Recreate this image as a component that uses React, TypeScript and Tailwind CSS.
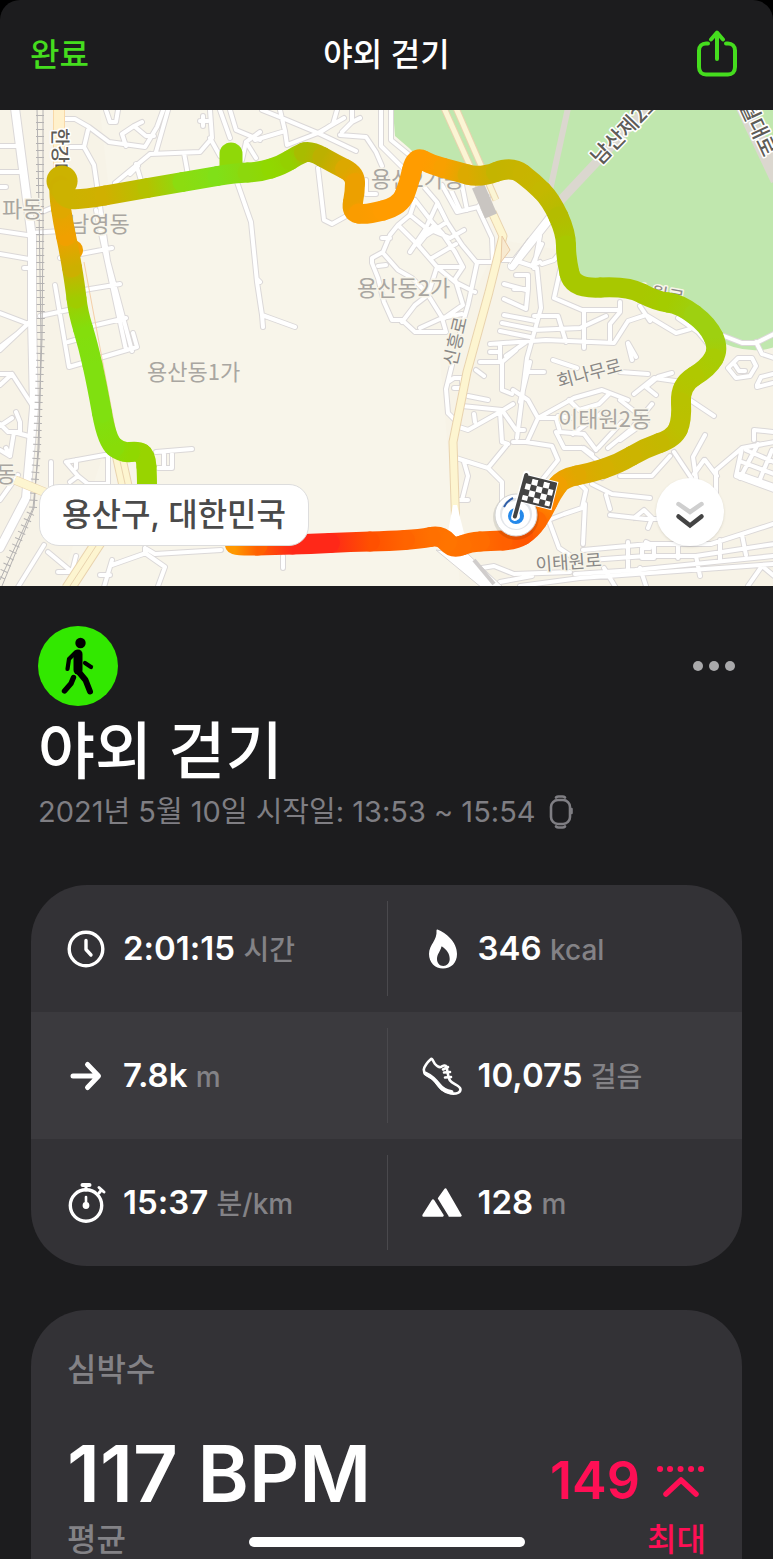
import type { ReactNode } from "react";

type RoutePoint = [number, number, string];

const ROUTE: RoutePoint[] = [
  [147, 492, "#98d400"],
  [147, 478, "#98d400"],
  [146, 456, "#98d400"],
  [138, 451, "#90d800"],
  [122, 453, "#88dc08"],
  [107, 441, "#80e010"],
  [97, 385, "#80e010"],
  [88, 345, "#84de0c"],
  [78, 312, "#a0cc00"],
  [75, 285, "#ccb000"],
  [69, 250, "#f0a000"],
  [63, 222, "#e0a800"],
  [59, 195, "#ccb000"],
  [60, 182, "#ccb200"],
  [64, 198, "#ccb200"],
  [80, 200, "#d0b000"],
  [130, 191, "#b4c200"],
  [165, 185, "#8cdc10"],
  [200, 179, "#80e018"],
  [235, 173, "#8cd80c"],
  [260, 172, "#90d800"],
  [282, 165, "#94d000"],
  [298, 155, "#a8bc00"],
  [310, 150, "#bcb000"],
  [335, 164, "#dca800"],
  [355, 174, "#eca000"],
  [355, 192, "#eca000"],
  [351, 212, "#fa9c00"],
  [366, 215, "#ff9c00"],
  [400, 206, "#ff9c00"],
  [409, 184, "#ff9c00"],
  [415, 156, "#ff9c00"],
  [432, 165, "#f8a000"],
  [455, 171, "#dcaa00"],
  [480, 178, "#c4b400"],
  [512, 166, "#c8b400"],
  [533, 182, "#c4b800"],
  [551, 200, "#b4bc00"],
  [566, 233, "#a8c800"],
  [566, 258, "#a8c800"],
  [573, 289, "#a8c800"],
  [628, 286, "#a8c800"],
  [656, 301, "#a4cc00"],
  [680, 304, "#9ed010"],
  [708, 325, "#9ed010"],
  [719, 349, "#a8cc04"],
  [708, 368, "#b0c800"],
  [680, 385, "#b8c200"],
  [682, 420, "#bcc000"],
  [674, 438, "#c4b800"],
  [645, 448, "#ccb400"],
  [618, 464, "#d4b000"],
  [590, 473, "#e0a800"],
  [563, 478, "#f0a000"],
  [552, 493, "#ff8800"],
  [543, 512, "#ff6a00"],
  [531, 530, "#ff5500"],
  [515, 540, "#ff6000"],
  [490, 541, "#ff6c00"],
  [470, 542, "#ff7000"],
  [453, 549, "#ff7400"],
  [441, 535, "#ff7000"],
  [420, 539, "#ff6400"],
  [390, 541, "#ff5000"],
  [350, 542, "#ff2818"],
  [310, 544, "#ff2818"],
  [275, 545, "#ff6000"],
  [240, 546, "#ff9800"],
  [230, 543, "#ff9c00"],
];

const STREETS = [
  // west of the railway
  "M0 146H18 M0 172H22 M0 187h6 M0 231 34 236 M0 254 29 259 M0 313 34 326 M0 350 34 318 M24 268h8",
  "M0 347l18-14 M0 374l12 0 M12 374 34 408 M0 385 12 374 M12 418l-12 8 M16 412l4 10v10h-12l-8-8 M14 432l18 5 M14 432l-4 24-10-6 M10 456l-4-8 M0 500 18 475",
  "M42 212 56 206 M30 233 62 231 M40 316 68 310 M51 462v24",
  // Namyeong-dong grid
  "M63 119h12l14 8 20 15 36 5 12-20 8-22 M88 130l-4 17H70 M84 147l10 18 14 96 24 90 M106 110l4 12h6l2-12",
  "M122 134l12-8 8-4 M122 134l4 12 M134 126l12 10h8 M150 154l-35 29 M136 164l6 20 M130 174l8-8 M150 154l50-2 12-14-2-28 M184 153l4 22 M168 110l-12 42",
  "M200 121h8 M203 116v10 M220 110l10 28 M210 138l10 18 M230 110l6 20 24 10 M260 132l-14 10-4 18 M246 142l10 16",
  "M60 258l52-10 M84 290l36-6 M92 326l34-8 M55 285l14 82 68-20-4-14 M96 210l30 140 M68 342l14-4",
  "M237 182l14 40 6 60 5 33 33 12 M257 279l3 3 M262 315l1 12",
  "M66 462l44-8 M66 462l12 14-8 6 M78 476l10 8h20v-30 M76 460v8 M156 452l36-3 M158 468h14v-14 M164 454v14",
  // south west
  "M48 552l24 20h-14 M72 572l4-16 M44 545l-26 42 M145 548l10 6 66-4 M112 565l34-12 M112 560l-8 27 M145 553l20 14-8 22 M283 556v12 M100 575l10 0 M145 548v6",
  // top centre
  "M255 140l30-9-5-21 M262 110l20 8 36 15 26-15 M318 133l38 18 M337 110l-4 14-14 9 M285 131l2 14 M287 145l31-12",
  "M340 135l26 2 10 15 6 14 M352 110v12l8-4 M352 122l-10 10 M381 110v36l34 34 M391 110v30l22 18 M318 168l6 52 8 4 18-10 M366 180v14h10 M386 176l-8 8",
  // Yongsan 2-ga
  "M415 200l-5 15-12 10-8 10-7 17-11 6v5l6 15 6 24 8 18h10l13 12h30 M390 238l-8 0 M378 266l8-1",
  "M415 200l17 22 10 11 13 19 8 15 M425 188l12 14 10 20 15 23 15 18 M442 185l15 27 21-5 10-10 M462 185l5 25",
  "M478 208l14 30 1 24h-16 M398 225l20 20 19 22 18 15 20 10 M383 253l15 17 14 8 16 16 M410 252l15-22 12-26",
  "M437 267h26l-8 12 8 26-20 14-15-24-13 10-13 17 M437 267l-9 28 M477 263l-9 42-8 28 M442 318l20-4 M442 318l-22 10 M418 245l16-20 M432 258l24-14",
  "M410 215l16 13 24 10 14-8 M447 222l-22 14 M442 318l4 14 M450 188l10 22",
  // Huam side
  "M498 260l16 0 18 6 10-22 M540 236l-6 32 M532 266l8-4 M562 250l-8 10-12 4 M516 275h12v14h-14 M528 289l-2 20-22-10 M504 284l22 6",
  "M537 268l4 40-14 50-10 80 M562 262l-8 36 28 12h36 M584 310v38 M620 302v10l-10 12v18 M534 316h24l8 26 M534 330l46-2 26-12 M490 344l56-4 68 3 14-22 18-6 30 18 14-4",
  "M504 315l32 6 M502 323l30 6 M500 331l30 6 M506 356l20-14 M640 306l10 15 M628 343l8 14 M678 318l20 14 10 12",
  "M724 336l18 7h14l18-9 M756 342l6 12 12 4 M728 368l10-10h14l4 8-6 10-14 2z M735 365l4 6h6 M757 387l16-4 M757 385l4-8 12-3",
  // east of Sinheung-ro
  "M480 362h22l14-12 M502 362v28l10 4 M476 370l8 6 M468 396l20 4 M462 406l40 4 14 20 8 0 M456 426l12 4 32-18 13-8 M474 414l1 8 M500 412l2 30 6 2 M456 458l32 10 18-22 M488 468l14 14v20 M464 462l4 14-6 24 M458 500h10",
  "M452 365l-6 24 2 24 10 10 M448 382l6-4h8v10h-8 M490 352h10 M500 345v14",
  "M513 442l14 0 11-24-10-18-15-10 M526 442l26 4 6 14-24 30 M538 418l36-20 M540 418h16l4 14 24 2 12 16 M530 362l-10 40 M528 372h16 M574 398l28-8 26 10 M553 360l24 8 M569 400l10 10 20-6 10-10",
  "M573 434l30-22 M582 448l20 16-8 14 M598 448l24-26 M608 448l32-26 M620 440l28-20 M652 404l-20 24 M574 418l-16-2 M556 432l8 16 18 0 M620 400l18 14 M634 394l20-16 28 4",
  "M690 400l24 16 M674 452l20 30 M694 474l10-14 M705 435l-12 22 4 28 M705 460l12 16 M620 476h32l18-20 M592 484l20 10 38 4 M606 495l4 14 M602 478l-6-8",
  "M610 515l36 4h12 M634 518l10-8 8 8-4 10 M716 510v-40l26-22 32-6 M754 430v10 M754 430l20 2 M742 448l-6 28 38 14 M746 450l28 12 M742 462l32 12 M740 474l34 12 M758 444l-18 34 M772 450l-14 34",
  "M656 395l-10-8 12-10 14-4 M620 372l28 2 M628 344l4 16 M584 448l8 6",
  // Itaewon-ro
  "M545 510l14 38 12 8 M585 504l-2 40 M583 550l66-6h62l62-20 M590 560l56-4h50l78-12 M646 542l8 4v12h-12v-10h8 M628 542v28 M678 540v18 M696 556l4 20 M575 574l60-4 138-14",
  "M520 586l60-8 194-14 M470 570l24-4 20 8 56-2 M500 582l32-6 M604 568l12 20 M640 568l6 18 M720 540v20 M742 535l4 20 M748 586l14-20 12 10",
  "M538 524l26-10 18-6 4-18-12-12 M562 478l-10 14",
];

const NARROW_ROADS = STREETS.join(" ");
const WIDE_ROADS = "M15 108l17 130v80l2 90-8 90-26 50 M558 208l-46 58";

const FINISH_CELLS = [
  [0, 1],
  [0, 3],
  [1, 0],
  [1, 2],
  [1, 4],
  [2, 1],
  [2, 3],
  [3, 0],
  [3, 2],
  [3, 4],
];

const middle = (a: RoutePoint, b: RoutePoint) => [
  (a[0] + b[0]) / 2,
  (a[1] + b[1]) / 2,
];

// Each leg bends round one point, from the middle of the leg before it
// to the middle of the leg after it.
function RouteLine() {
  return (
    <g strokeWidth="20" strokeLinecap="round">
      {ROUTE.slice(1, -1).map((point, i) => {
        const [x1, y1] = middle(ROUTE[i], point);
        const [x2, y2] = middle(point, ROUTE[i + 2]);
        return (
          <g key={i}>
            <linearGradient
              id={`leg-${i}`}
              gradientUnits="userSpaceOnUse"
              x1={x1}
              y1={y1}
              x2={x2}
              y2={y2}
            >
              <stop offset="0" stopColor={ROUTE[i][2]} />
              <stop offset="1" stopColor={point[2]} />
            </linearGradient>
            <path
              d={`M${x1} ${y1}Q${point[0]} ${point[1]} ${x2} ${y2}`}
              stroke={`url(#leg-${i})`}
            />
          </g>
        );
      })}
    </g>
  );
}

function RouteMap() {
  return (
    <svg
      viewBox="0 110 773 476"
      preserveAspectRatio="xMidYMid slice"
      className="block h-[476px] w-full bg-[#f8f5ea]"
      fill="none"
      strokeLinejoin="round"
      aria-label="경로 지도"
    >
      <path
        d="M0 110H100L110 200 70 240 108 440 60 586H0z M440 360l60-120 60 10 80 60 133 25v251H460z"
        fill="#f7f3e7"
      />
      <path
        d="M393 110l2 26 14 12 14 14 62 14 40-4 26 34 14 32 6 40 16 10 70 6 40 22 16 22q24 14 48 12 12-1 24-8V110z"
        fill="#c0e7ae"
      />
      <g stroke="#dbd7cf">
        <path d="M568 108l-18 82" strokeWidth="6" />
        <path d="M650 105l-90 96" strokeWidth="9" />
        <path d="M742 104l36 76" strokeWidth="15" />
      </g>

      <g strokeLinecap="round">
        <path d={NARROW_ROADS} stroke="#dbd8d8" strokeWidth="6" />
        <path d={WIDE_ROADS} stroke="#dbd8d8" strokeWidth="10" />
        <path d={NARROW_ROADS} stroke="#fff" strokeWidth="4" />
        <path d={WIDE_ROADS} stroke="#fff" strokeWidth="8" />
        <path d="M528 238l-18 26" stroke="#d8d5d4" />
      </g>

      {/* railway */}
      <g stroke="#b4b2b2">
        <path d="M37 108l2 100 2 130-2 110-6 60-33 72" />
        <path d="M43 108v120l-1 110-4 110-4 60-32 78" />
        <path
          d="M40 108v120l1 110-4 110-4 60-32 70"
          strokeWidth="8"
          strokeDasharray="1 6"
        />
      </g>

      {/* main roads */}
      <path d="M59 108v60" stroke="#f9d9a8" strokeWidth="12" />
      <path d="M59 108v60" stroke="#fff1cc" strokeWidth="10" />
      <path d="M84 262l34 182 M103 400l12 50" stroke="#f5cfa8" />
      <g stroke="#e9d3ae">
        <path d="M118 452l10 45-60 92" strokeWidth="14" />
        <path d="M492 212l11 24-14 56-22 80-14 70 3 90" strokeWidth="9" />
        <path d="M15 480l34 14" strokeWidth="9" />
      </g>
      <g stroke="#fdf5d0">
        <path d="M118 452l10 45-60 92" strokeWidth="12" />
        <path d="M492 212l11 24-14 56-22 80-14 70 3 90" strokeWidth="7" />
        <path d="M15 480l34 14" strokeWidth="8" />
      </g>
      <path d="M118 452l10 45-60 92" stroke="#e9d3ae" />
      <path d="M444 108l44 98 M456 108l40 92" stroke="#e9d3ae" strokeWidth="7" />
      <path d="M444 108l44 98 M456 108l40 92" stroke="#fbf5d4" strokeWidth="5" />
      <path d="M478 186l13 30" stroke="#c9c5c1" strokeWidth="13" />
      <path d="M502 236l8 14-9 12z" fill="#f8ead0" stroke="#e9c9a4" />
      <path d="M453 505l-6 32h18l-8-32z" fill="#fff" />
      <path d="M436 550l32 4 36 34h-22z" fill="#fff" stroke="#d8d5d4" />
      <path d="M474 560l20 24" stroke="#d0cdcc" strokeWidth="4" />

      <g
        fontFamily='"Noto Sans CJK KR", sans-serif'
        fill="#a9a6a1"
        stroke="#f8f5ea"
        strokeWidth="3"
        paintOrder="stroke"
      >
        <g fontSize="22">
          <text x="2" y="217">파동</text>
          <text x="69" y="232">남영동</text>
          <text x="147" y="380">용산동1가</text>
          <text x="357" y="296">용산동2가</text>
          <text x="371" y="187">용산2가동</text>
          <text x="558" y="427">이태원2동</text>
          <text x="-4" y="482">동</text>
        </g>
        <g fontSize="18" fill="#8a8886">
          <text transform="translate(559 388) rotate(-15)">회나무로</text>
          <text transform="translate(536 571) rotate(-4)">이태원로</text>
          <text transform="translate(456 367) rotate(-77)">신흥로</text>
          <text transform="translate(634 296) rotate(10)">소월로</text>
        </g>
        <g fontSize="21" fill="#5e5c58" fontWeight="500" stroke="#fff">
          <text transform="translate(53 128) rotate(90)" fontSize="19">
            한강대로
          </text>
          <text transform="translate(600 166) rotate(-46)">남산제2호터널</text>
          <text transform="translate(731 88) rotate(65)">소월대로</text>
        </g>
      </g>

      <path d="M62 181h.1" stroke="#ccb200" strokeWidth="31" strokeLinecap="round" />
      <path d="M231 154v14" stroke="#90d808" strokeWidth="23" strokeLinecap="round" />
      <path d="M73 250h.1" stroke="#f0a000" strokeWidth="20" strokeLinecap="round" />
      <RouteLine />

      {/* finish marker */}
      <circle cx="516" cy="517" r="23" fill="#000" opacity=".1" />
      <circle cx="516" cy="515" r="21" fill="#fff" stroke="#d4d4d4" />
      <circle cx="516" cy="514" r="16" fill="#e3e6ea" />
      <circle cx="516" cy="515" r="14" fill="#fff" />
      <path d="M504 507q3-6 9-9" stroke="#2f5ea8" strokeWidth="2" />
      <circle cx="516" cy="516" r="6" fill="#fff" stroke="#2589ea" strokeWidth="4" />
      <g transform="translate(526 476) rotate(14)">
        <path
          d="M0-2L-1 43"
          stroke="#fff"
          strokeWidth="7"
          strokeLinecap="round"
        />
        <path d="M-2-2h35v29H-2z" fill="#fff" />
        <path d="M0 0h31v25H0z" fill="#434343" />
        {FINISH_CELLS.map(([row, col]) => (
          <rect
            key={`${row}-${col}`}
            x={1 + col * 6}
            y={1 + row * 6}
            width="6"
            height="6"
            fill="#fff"
          />
        ))}
        <path
          d="M0 0h31v25H0"
          stroke="#434343"
          strokeWidth="2"
        />
        <path d="M0-1L-1 42" stroke="#434343" strokeWidth="4" strokeLinecap="round" />
      </g>
    </svg>
  );
}

function Icon({ children }: { children: ReactNode }) {
  return (
    <svg
      viewBox="0 0 40 40"
      className="size-10 shrink-0"
      fill="none"
      stroke="currentColor"
      strokeWidth="3"
      strokeLinecap="round"
      strokeLinejoin="round"
      aria-hidden="true"
    >
      {children}
    </svg>
  );
}

const clock = (
  <Icon>
    <circle cx="19" cy="20" r="16.800" strokeWidth="3.400" />
    <path d="M19 11.500v9l5 5.500" strokeWidth="3.400" />
  </Icon>
);

const flame = (
  <Icon>
    <path
      fillRule="evenodd"
      stroke="none"
      fill="currentColor"
      d="M15.500.6C24 4 35 13 35 25c0 9-6 14.500-14 14.500S7 33.500 7 25C7 16 15.500 11 14.500 1.500c0-.7.4-1.100 1-.9zM19.300 18c-.7 4-4.300 7-4.300 12 0 4.200 2.700 7 6.300 7s6.400-3 6.400-7c0-6-3.500-9.500-7.400-12.300-.5-.3-.9-.1-1 .3z"
    />
  </Icon>
);

const arrow = (
  <Icon>
    <path d="M6 20h25M20.500 8.500 31.500 20 20.500 31.500" strokeWidth="5" />
  </Icon>
);

const shoe = (
  <Icon>
    <path
      d="M8.500 3.500C5.500 6 2 11 1.800 13.500c0 5 3.500 6 8 8.500 5 3 8 14 19 15.500 6 .6 10-.7 9.600-4.500-.4-3.500-8-5-10.400-8.500-2-3-2.500-9-3.400-13.500-1-2.500-3.600-1.500-5-.4-2 1.400-4.600-.3-6.600-2.600-2-2.500-2.500-6.500-4.500-4.500z"
      strokeWidth="2.600"
    />
    <path d="M26 11l-5 2.500M28 16l-6 .5M29 21l-6 .5" strokeWidth="2.600" />
    <path d="M3.500 17.500c7 3 11 8 14 12s8 6 12 6.500" strokeWidth="4" />
  </Icon>
);

const stopwatch = (
  <Icon>
    <circle cx="19" cy="22.500" r="15.700" strokeWidth="3.400" />
    <path d="M15.500 2h7" strokeWidth="4" />
    <path d="M19 3v4M32 4.500l5 4.500M34.500 7l-2.500 3" />
    <path d="M19 14v8" strokeWidth="2.600" />
    <circle cx="19" cy="22.500" r="2.600" fill="currentColor" strokeWidth="1.600" />
  </Icon>
);

const mountain = (
  <Icon>
    <path
      d="M1.500 32.500 11 17.500l9.500 15zM18.500 13.500 23.500 6.500 38.500 32.500H27L16.800 16z"
      fill="currentColor"
      strokeWidth="2.400"
    />
    <path d="M14 14.500 26 34" stroke="#333236" strokeWidth="2" strokeLinecap="butt" />
  </Icon>
);

const STAT_ROWS = [
  [
    { label: "시간", icon: clock, value: "2:01:15", unit: "시간" },
    { label: "열량", icon: flame, value: "346", unit: "kcal" },
  ],
  [
    { label: "거리", icon: arrow, value: "7.8k", unit: "m" },
    { label: "걸음 수", icon: shoe, value: "10,075", unit: "걸음" },
  ],
  [
    { label: "페이스", icon: stopwatch, value: "15:37", unit: "분/km" },
    { label: "고도", icon: mountain, value: "128", unit: "m" },
  ],
];

function StatsCard() {
  return (
    <section className="mx-[31px] mt-[55px] overflow-hidden rounded-[56px] bg-[#333236]">
      {STAT_ROWS.map((row, i) => (
        <div key={i} className="grid grid-cols-2 py-4 even:bg-[#3b3a3e]">
          {row.map((stat) => (
            <div
              key={stat.label}
              aria-label={stat.label}
              className="flex h-[95px] items-center gap-4 border-[#4a494d] pl-9 even:border-l even:pl-[34px]"
            >
              {stat.icon}
              <p className="text-[33px] font-semibold whitespace-nowrap">
                {stat.value}{" "}
                <span className="text-[28px] font-medium text-[#838286]">
                  {stat.unit}
                </span>
              </p>
            </div>
          ))}
        </div>
      ))}
    </section>
  );
}

function HeartRateCard() {
  return (
    <section className="mx-[31px] mt-11 flex-1 rounded-t-[56px] bg-[#333236] px-9 pt-9">
      <h2 className="text-[32px] leading-12 font-medium text-[#838286]">심박수</h2>
      <div className="mt-8 flex items-end justify-between">
        <div>
          <p className="text-[78px] leading-[96px] font-semibold">117 BPM</p>
          <p className="text-[32px] leading-9 font-medium text-[#838286]">평균</p>
        </div>
        <div className="text-right text-[#ff0f55]">
          <p className="flex items-center justify-end gap-4 text-[52px] leading-[82px] font-semibold">
            149
            <svg
              viewBox="0 0 50 40"
              className="h-10 w-[50px]"
              fill="none"
              stroke="currentColor"
              strokeLinecap="round"
              strokeLinejoin="round"
              aria-hidden="true"
            >
              <path d="M4 8h.1M14 8h.1M24.500 8h.1M35 8h.1M45 8h.1" strokeWidth="6" />
              <path d="M10 33 25 19l15 14" strokeWidth="5.500" />
            </svg>
          </p>
          <p className="text-[32px] leading-9 font-medium">최대</p>
        </div>
      </div>
    </section>
  );
}

export default function App() {
  return (
    <div className="min-h-screen bg-black">
      <main className="relative flex min-h-screen flex-col overflow-hidden rounded-t-[20px] bg-[#1c1c1e] font-['Inter','Noto_Sans_CJK_KR',sans-serif] text-white">
        <header className="grid h-[110px] grid-cols-3 items-center px-[30px] text-[32px] font-medium">
          <button type="button" className="justify-self-start text-[#45dd1e]">
            완료
          </button>
          <h1 className="text-center">야외 걷기</h1>
          <button
            type="button"
            aria-label="공유"
            className="justify-self-end text-[#45dd1e]"
          >
            <svg
              viewBox="0 0 50 50"
              className="size-[50px]"
              fill="none"
              stroke="currentColor"
              strokeWidth="4"
              strokeLinecap="round"
              strokeLinejoin="round"
            >
              <path d="M15 13.500h-2c-4 0-7 3-7 7V37c0 5 3 7.500 7 7.500h22c4 0 7-2.500 7-7.500V20.500c0-4-3-7-7-7h-2" />
              <path d="M24 29V4M18 9.500 24 2.500l6 7" strokeWidth="4" />
            </svg>
          </button>
        </header>

        <div className="relative">
          <RouteMap />
          <p className="absolute bottom-10 left-[39px] rounded-[20px] border border-[#dddddd] bg-white px-[22px] py-[6px] text-[32px] leading-12 font-medium text-[#4a4a4a]">
            용산구, 대한민국
          </p>
          <button
            type="button"
            aria-label="지도 접기"
            className="absolute right-[49px] bottom-10 flex size-[68px] items-center justify-center rounded-full bg-white shadow"
          >
            <svg
              viewBox="0 0 34 34"
              className="size-[34px]"
              fill="none"
              strokeLinecap="round"
              strokeWidth="4.500"
            >
              <path d="M5.500 9 17 17 28.500 9" stroke="#cfcfcf" />
              <path d="M5.500 21.500 17 30.500 28.500 21.500" stroke="#444" />
            </svg>
          </button>
        </div>

        <section className="px-[38px] pt-10">
          <div className="flex items-center justify-between">
            <svg viewBox="0 0 80 80" className="size-20" aria-hidden="true">
              <circle cx="40" cy="40" r="40" fill="#32e800" />
              <circle cx="42.500" cy="17" r="5.200" />
              <g
                fill="none"
                stroke="#000"
                strokeLinecap="round"
                strokeLinejoin="round"
              >
                <path d="M40 28 40 44" strokeWidth="9" />
                <path d="M37.500 26.500 31 33l-1.500 10" strokeWidth="4.200" />
                <path d="M47 37l6 4" strokeWidth="4.200" />
                <path d="M40 45l7.500 9 4.500 11.500" strokeWidth="6" />
                <path d="M35.500 51.500l-2.500 6-6.500 7.500" strokeWidth="5.400" />
              </g>
            </svg>
            <button type="button" aria-label="더 보기" className="flex gap-[6px]">
              <span className="size-[10px] rounded-full bg-[#a9a9ab]" />
              <span className="size-[10px] rounded-full bg-[#a9a9ab]" />
              <span className="size-[10px] rounded-full bg-[#a9a9ab]" />
            </button>
          </div>
          <h2 className="pt-1 text-[62px] leading-[84px] font-medium">야외 걷기</h2>
          <p className="flex items-center gap-3 text-[29px] leading-9 text-[#7f7e83]">
            2021년 5월 10일 시작일: 13:53 ~ 15:54
            <svg
              viewBox="0 0 26 36"
              className="h-9 w-[26px]"
              fill="none"
              stroke="currentColor"
              strokeWidth="2.600"
              strokeLinecap="round"
              aria-label="Apple Watch"
            >
              <rect x="3" y="6" width="19" height="24" rx="7" />
              <path d="M8 3.500q1-1 2.500-1h4q1.500 0 2.500 1M8 32.500q1 1 2.500 1h4q1.500 0 2.500-1M23.500 15v4" />
            </svg>
          </p>
        </section>

        <StatsCard />
        <HeartRateCard />

        <div className="absolute bottom-3 left-1/2 h-[10px] w-[276px] -translate-x-1/2 rounded-full bg-white" />
      </main>
    </div>
  );
}
